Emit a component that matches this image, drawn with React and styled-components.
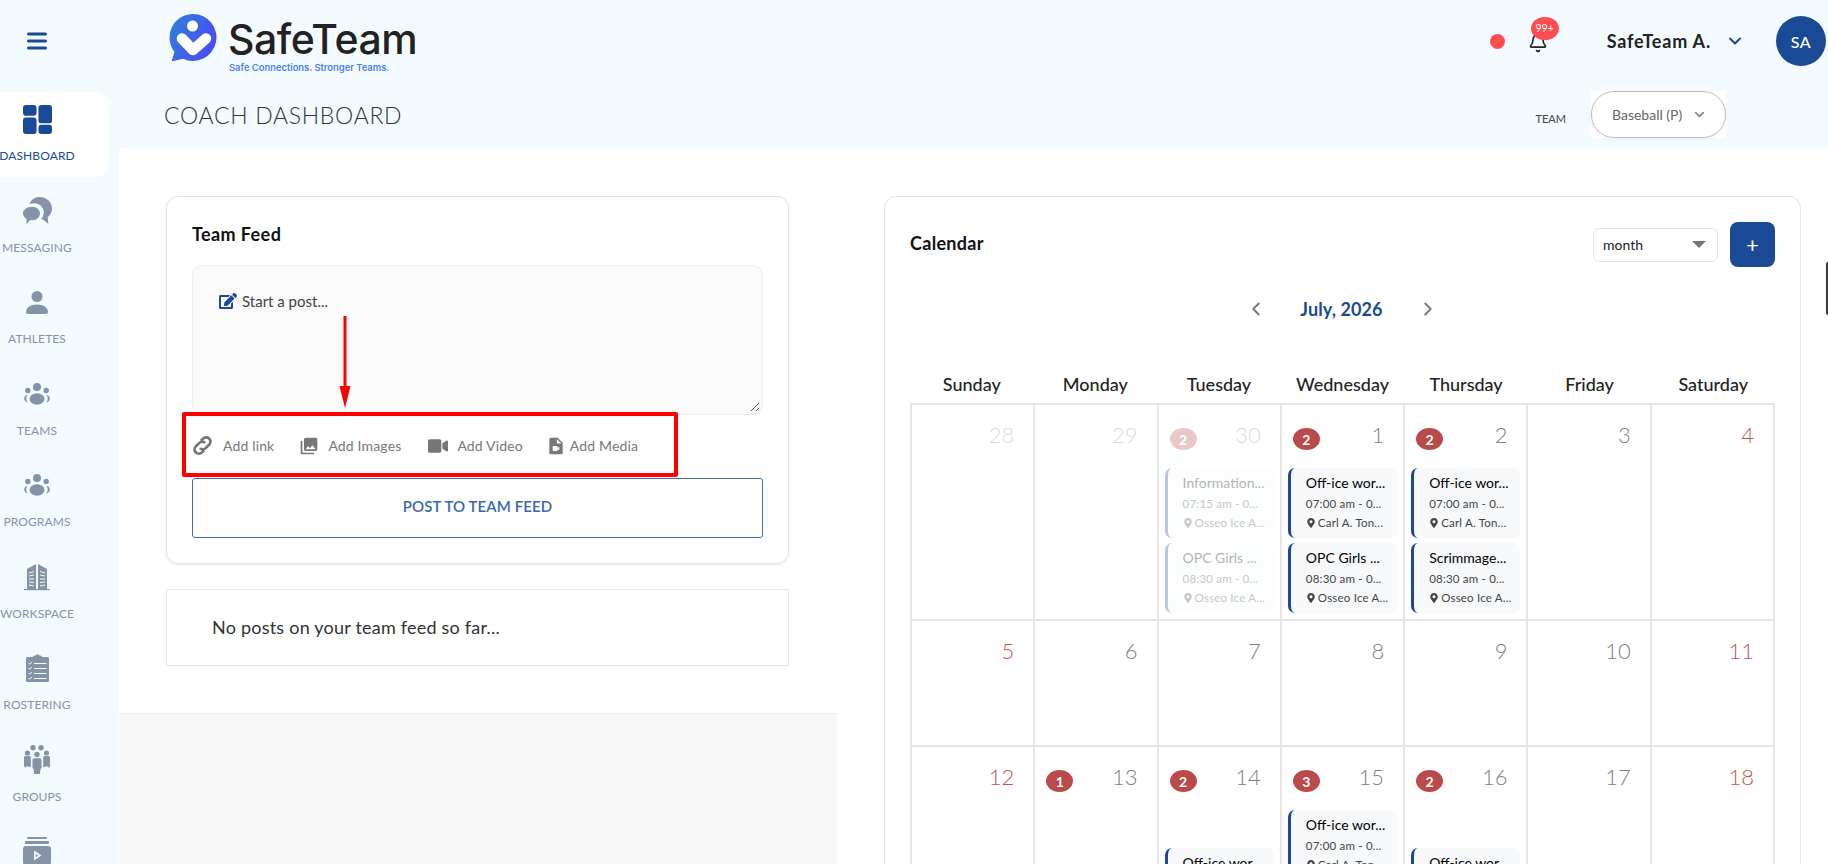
import React from "react";
import styled, { createGlobalStyle } from "styled-components";
import { FaVideo, FaMapMarkerAlt, FaEdit } from "react-icons/fa";
import { MdVideoFile, MdPhotoLibrary } from "react-icons/md";
import { ChevronDown, ChevronLeft, ChevronRight, Bell } from "lucide-react";

const NAVY = "#1a4a96";
const SKY = "#f3fbff";
const SIDE = "#8593a8";

const Global = createGlobalStyle`
  html, body { margin: 0; padding: 0; height: 100%; overflow: hidden; background: #fff; }
  body { font-family: Lato, "Open Sans", sans-serif; }
  * { box-sizing: border-box; }
`;

const Shell = styled.div`
  display: flex; width: 1828px; height: 864px; overflow: hidden; background: ${SKY}; position: relative;
`;
const Sidebar = styled.nav`
  width: 119px; flex: none; display: flex; flex-direction: column; overflow: hidden;
`;
const Burger = styled.div`
  height: 92px; width: 74px; flex: none; display: flex; align-items: center; justify-content: center; padding-bottom: 10px;
`;
const NavItem = styled.div`
  width: 109px; height: 85px; margin-bottom: 6.5px; flex: none; display: flex; flex-direction: column; align-items: center; padding-right: 35px;
  background: ${p => (p.$active ? "#fff" : "transparent")};
  border-radius: 0 14px 14px 0;
  color: ${p => (p.$active ? NAVY : SIDE)};
`;
const NavIcon = styled.div`
  height: 50px; width: 74px; flex: none; display: flex; align-items: center; justify-content: center; padding-top: 4px;
`;
const NavLabel = styled.div`
  font-size: 12px; line-height: 16px; margin-top: 6px; white-space: nowrap; text-align: center; width: 74px; display: flex; justify-content: center; letter-spacing: .1px;
`;
const Main = styled.div`
  flex: 1; min-width: 0; display: flex; flex-direction: column;
`;
const TopBar = styled.header`
  height: 82px; flex: none; display: flex; align-items: center; padding: 0 2px 0 50px;
`;
const Logo = styled.div`
  display: flex; align-items: flex-start; gap: 12px; margin-top: 5px;
`;
const WordBlock = styled.div`
  display: flex; flex-direction: column;
`;
const Word = styled.div`
  font-family: Inter, sans-serif; font-size: 41px; line-height: 44px; font-weight: 500; color: #222; letter-spacing: -.45px; margin-top: 3px; margin-left: -1px;
`;
const Tagline = styled.div`
  font-family: Inter, sans-serif; font-size: 9.4px; line-height: 12px; font-weight: 600; color: #4f80f5; margin-top: 1px;
`;
const TopRight = styled.div`
  margin-left: auto; display: flex; align-items: center;
`;
const StatusDot = styled.span`
  width: 15px; height: 15px; border-radius: 50%; background: #ff4d4f; margin-right: 21px;
`;
const BellWrap = styled.div`
  position: relative; width: 24px; height: 24px; margin-right: 57px; margin-top: 3px; color: #222; display: flex; align-items: center; justify-content: center;
`;
const BellBadge = styled.span`
  position: absolute; left: 5px; top: -14px; width: 28px; height: 23px; border-radius: 50%; background: #ff4d4f; color: #fff; font-size: 10.5px;
  display: flex; align-items: center; justify-content: center;
`;
const UserName = styled.span`
  font-size: 18px; font-weight: 700; color: #222; letter-spacing: .8px; margin-right: 14px;
`;
const Avatar = styled.div`
  width: 50px; height: 50px; border-radius: 50%; background: ${NAVY}; color: #fff; font-size: 16px; font-weight: 500;
  display: flex; align-items: center; justify-content: center; margin-left: 31px; letter-spacing: .5px;
`;
const SubBar = styled.div`
  height: 66px; flex: none; display: flex; align-items: flex-start; padding: 9px 102px 0 45px;
`;
const PageTitle = styled.h1`
  margin: 10px 0 0; font-size: 23px; line-height: 28px; font-weight: 300; color: #333; letter-spacing: .7px;
`;
const TeamLabel = styled.span`
  margin-left: auto; margin-top: 21px; font-size: 11px; color: #444; margin-right: 25px; line-height: 14px;
`;
const TeamSelect = styled.div`
  width: 135px; height: 47px; background: #fff;
`;
const TeamPill = styled.div`
  height: 100%; border: 1px solid #bdbdbd; border-radius: 23px; display: flex; align-items: center; justify-content: space-between; padding: 0 18px 0 20px; font-size: 14px; color: #666; box-shadow: 0 2px 4px rgba(0,0,0,.04);
`;
const Content = styled.div`
  flex: 1; min-height: 0; display: flex; background: #fff;
`;
const LeftCol = styled.div`
  width: 718px; flex: none; display: flex; flex-direction: column;
`;
const LeftTop = styled.div`
  height: 566px; flex: none; padding: 48px 48px 0 47px; background: #fff; border-bottom: 1px solid #eee;
`;
const LeftFill = styled.div`
  flex: 1; background: #f8f8f8;
`;
const RightCol = styled.div`
  flex: 1; padding: 48px 27px 0 47px; overflow: hidden;
`;
const FeedCard = styled.section`
  position: relative; height: 368px; border: 1px solid #e2e2e2; border-radius: 12px; padding: 26px 25px 0; box-shadow: 0 1px 3px rgba(0,0,0,.08);
`;
const CardTitle = styled.h2`
  margin: 0; font-size: 18px; line-height: 22px; font-weight: 700; color: #111; letter-spacing: .4px;
`;
const PostBox = styled.div`
  margin-top: 20px; height: 150px; background: #fafafa; border: 1px solid #eee; border-radius: 10px; padding: 26px 26px; position: relative;
  display: flex; align-items: flex-start; gap: 5px; font-size: 15px; color: #444;
`;
const Grip = styled.svg`
  position: absolute; right: 2px; bottom: 2px;
`;
const Attach = styled.div`
  height: 63px; padding-bottom: 2px; display: flex; align-items: center; font-size: 14px; color: #777; letter-spacing: .15px;
`;
const AttachItem = styled.span`
  display: flex; align-items: center; gap: ${p => p.$gap || 11}px; margin-right: ${p => p.$mr || 25}px; color: #777;
`;
const PostButton = styled.button`
  display: block; width: 100%; height: 60px; background: #fff; border: 1px solid #3f6cb0; border-radius: 3px; color: #3868ad;
  font: 600 15px Lato, sans-serif; letter-spacing: .1px; padding: 0 0 5px; cursor: pointer;
`;
const EmptyCard = styled.div`
  margin-top: 25px; height: 77px; border: 1px solid #e6e6e6; display: flex; align-items: center; padding: 0 0 2px 45px; font-size: 18px; letter-spacing: .22px; color: #333;
`;
const RedBox = styled.div`
  position: absolute; left: 15px; top: 215px; width: 496px; height: 65px; border: 4px solid #f00; border-radius: 2px; pointer-events: none;
`;
const RedArrow = styled.svg`
  position: absolute; left: 171px; top: 119px;
`;
const CalCard = styled.section`
  border: 1px solid #e2e2e2; border-radius: 12px 12px 0 0; padding: 24px 25px 0 25px; height: 900px;
`;
const CalHead = styled.div`
  display: flex; align-items: center; height: 46px;
`;
const CalTitle = styled.h2`
  margin: 0 0 2px; font-size: 18px; font-weight: 700; color: #111; letter-spacing: .3px;
`;
const ViewSelect = styled.div`
  margin-left: auto; width: 125px; height: 34px; margin-top: 1px; border: 1px solid #e4e4e4; border-radius: 6px; display: flex; align-items: center; justify-content: space-between; padding: 0 11px 0 9px; font-size: 14px; color: #222;
`;
const Caret = styled.span`
  width: 0; height: 0; border-left: 7px solid transparent; border-right: 7px solid transparent; border-top: 7px solid #777;
`;
const AddBtn = styled.button`
  margin-left: 12px; width: 45px; height: 45px; border: 0; border-radius: 8px; background: ${NAVY}; color: #fff; font: 400 22px Lato, sans-serif; display: flex; align-items: center; justify-content: center;
`;
const MonthNav = styled.div`
  display: flex; align-items: center; justify-content: center; height: 40px; margin-top: 22px; margin-left: -2px; color: #777;
`;
const MonthName = styled.span`
  width: 150px; text-align: center; font-size: 18px; font-weight: 700; color: ${NAVY}; letter-spacing: .1px;
`;
const WeekRow = styled.div`
  display: grid; grid-template-columns: repeat(7, 1fr); margin-top: 32px; height: 42px; align-items: center;
`;
const WeekDay = styled.div`
  text-align: center; font-size: 18px; font-weight: 500; color: #222; padding-top: 3px;
`;
const Grid = styled.div`
  display: grid; grid-template-columns: repeat(7, 1fr); border-top: 2px solid #e5e5e5; border-left: 2px solid #e5e5e5;
`;
const Cell = styled.div`
  height: ${p => p.$h}px; border-right: 2px solid #e5e5e5; border-bottom: 2px solid #e5e5e5; padding: 22px 6px 0; overflow: hidden;
`;
const CellTop = styled.div`
  display: flex; justify-content: space-between; height: 24px; padding: 0 0 0 5px; align-items: center; margin-bottom: 17px;
`;
const Badge = styled.span`
  width: 27px; height: 22px; border-radius: 50%; background: #bb4b4b; color: #fff; font-size: 14px; font-weight: 700; display: flex; align-items: center; justify-content: center;
  opacity: ${p => (p.$faded ? 0.3 : 1)};
`;
const DayNum = styled.span`
  margin-left: auto; margin-right: 13px; margin-bottom: 10px; font-size: 22px; font-weight: 300; color: ${p => (p.$red ? "#c05555" : "#808080")}; opacity: ${p => (p.$faded ? 0.28 : 1)};
`;
const Event = styled.div`
  height: 70px; margin-bottom: 5px; margin-top: ${p => p.$top || 0}px; background: #f7f9fb; border-left: 3px solid ${NAVY}; border-radius: 7px; padding: 4px 4px 0 15px; overflow: hidden; opacity: ${p => (p.$faded ? 0.3 : 1)};
`;
const EvTitle = styled.div`
  font-size: 14px; line-height: 22px; color: #000; white-space: nowrap;
`;
const EvMeta = styled.div`
  font-size: 11.5px; line-height: 19px; color: #444; white-space: nowrap; display: flex; align-items: center; gap: 2px; letter-spacing: .2px;
`;
const EdgeHandle = styled.div`
  position: absolute; right: 0; top: 262px; width: 2px; height: 53px; background: #3a3a3a; border-radius: 3px 0 0 3px;
`;

const Dash = () => (
  <svg width="29" height="29" viewBox="0 0 30 30" fill={NAVY}>
    <rect x="0" y="0" width="14" height="11" rx="3" /><rect x="0" y="13" width="14" height="17" rx="3" />
    <rect x="16" y="0" width="14" height="19" rx="3" /><rect x="16" y="20.500" width="14" height="9.500" rx="3" />
  </svg>
);
const Msg = () => (
  <svg width="31" height="30" viewBox="0 0 31 31" fill={SIDE}>
    <path d="M17 1c8 0 13.500 5 13.500 12 0 4-1.700 7-4.500 9l.8 7-6-5c-.6.1-1.200.1-1.800.1 2-2 3-4.500 3-7 0-5.500-4.500-9.500-10-9.500-1.800 0-3.300.3-4.700 1C9 4 12.500 1 17 1z"/>
    <path d="M10 11c4.600 0 8 3 8 7s-3.400 7-8 7c-.6 0-1.200-.1-1.700-.2L4 29l.1-5.500C1.900 22.200.5 20.200.5 18c0-4 4-7 9.500-7z"/>
  </svg>
);
const Person = () => (
  <svg width="22" height="23" viewBox="0 0 22 23" fill={SIDE}>
    <circle cx="11" cy="5.500" r="5.500"/><path d="M0 21c0-4.500 4.500-7.500 11-7.500S22 16.500 22 21c0 1.200-.8 2-2 2H2c-1.200 0-2-.8-2-2z"/>
  </svg>
);
const Group = () => (
  <svg width="26" height="22" viewBox="0 0 26 22" fill={SIDE}>
    <circle cx="13" cy="4" r="4"/><ellipse cx="13" cy="16" rx="7.500" ry="5.800"/>
    <circle cx="3.800" cy="7.500" r="2.700"/><circle cx="22.200" cy="7.500" r="2.700"/>
    <path d="M.2 15.500c0-2 1.300-3.300 3.300-3.800-1.600 2.300-1.600 5.300 0 8C1.500 19 .2 17.500.2 15.500z"/>
    <path d="M25.800 15.500c0-2-1.300-3.300-3.300-3.800 1.600 2.300 1.600 5.300 0 8 2-.7 3.300-2.200 3.300-4.200z"/>
  </svg>
);
const Tower = () => (
  <svg width="26" height="28" viewBox="0 0 26 28" fill={SIDE}>
    <path d="M3 6l9-5v25H3zM14 1l9 5v20h-9z"/><rect x="0" y="26" width="26" height="1.200"/>
    <path d="M5 10l5-1.500M5 13l5-1M5 16h5M5 19l5 .5M5 22l5 1M21 10l-5-1.500M21 13l-5-1M21 16h-5M21 19l-5 .5M21 22l-5 1" stroke="#f3fbff" strokeWidth="1"/>
  </svg>
);
const Clip = () => (
  <svg width="23" height="28" viewBox="0 0 23 28" fill={SIDE}>
    <rect x="0" y="3" width="23" height="25" rx="1.500"/><path d="M7 3c0-1 1-1.500 2.500-1.500L11.500 0l2 1.500C15 1.500 16 2 16 3v2H7z"/>
    <path d="M2.500 9l1.200 1.200L6 8M2.500 14l1.200 1.200L6 13M2.500 19l1.200 1.200L6 18M2.500 24l1.200 1.200L6 23" stroke="#f3fbff" strokeWidth="1" fill="none"/>
    <path d="M8 9.500h12.500M8 14.500h12.500M8 19.500h12.500M8 24.500h12.500" stroke="#f3fbff" strokeWidth="1"/>
  </svg>
);
const Crowd = () => (
  <svg width="26" height="29" viewBox="0 0 26 29" fill={SIDE}>
    <circle cx="9" cy="2.800" r="2.700"/><circle cx="17" cy="2.800" r="2.700"/>
    <circle cx="3.500" cy="8" r="2.600"/><circle cx="22.500" cy="8" r="2.600"/><circle cx="13" cy="9.500" r="2.700"/>
    <path d="M0 12.500c0-1 1-1.500 2-1.500h3c1 0 1.800.7 1.800 1.500V22H5v-.5H2V22.500H1L0 21zM19.200 12.500c0-.8.800-1.500 1.800-1.500h3c1 0 2 .5 2 1.500V21l-1 1.500h-1v-1h-3v.5h-1.800zM8.500 15c0-1 1-1.700 2-1.700h5c1 0 2 .7 2 1.700v8l-1 1-.6 5h-5.800l-.6-5-1-1z"/>
  </svg>
);
const Play = () => (
  <svg width="28" height="28" viewBox="0 0 28 28" fill={SIDE}>
    <rect x="4" y="0" width="20" height="2" rx="1"/><rect x="2" y="4" width="24" height="3" rx="1"/>
    <rect x="0" y="9" width="28" height="19" rx="3"/><path d="M11 13.500l7.500 5-7.500 5z" fill="#f3fbff"/><path d="M12.800 16.800l2.300 1.700-2.300 1.700z" fill={SIDE}/>
  </svg>
);

const nav = [
  ["DASHBOARD", <Dash />, true], ["MESSAGING", <Msg />], ["ATHLETES", <Person />],
  ["TEAMS", <Group />], ["PROGRAMS", <Group />],
  ["WORKSPACE", <Tower />], ["ROSTERING", <Clip />], ["GROUPS", <Crowd />], ["", <Play />],
];

const LogoMark = () => (
  <svg width="48" height="48" viewBox="0 0 48 48">
    <defs><linearGradient id="lg" x1="0" y1="0" x2="1" y2=".5"><stop offset="0" stopColor="#2d84d8"/><stop offset="1" stopColor="#4a4cf7"/></linearGradient></defs>
    <path d="M24 0a23.500 23.500 0 1 1-10 44.800L2.500 47.500l3-9.500A23.500 23.500 0 0 1 24 0z" fill="url(#lg)"/>
    <circle cx="23.500" cy="12" r="5.500" fill="#fff"/>
    <path d="M13 24.500L24 36L37 24.500" fill="none" stroke="#fff" strokeWidth="10.500" strokeLinecap="round" strokeLinejoin="round"/>
  </svg>
);
const LinkIcon = () => (
  <svg width="21" height="21" viewBox="0 0 20 20" fill="none" stroke="#777" strokeWidth="2.600">
    <path d="M8.500 5.500l2-2a4 4 0 0 1 6 5.500l-3.500 3.500a4 4 0 0 1-5.500 0"/><path d="M11.500 14.500l-2 2a4 4 0 0 1-6-5.500L7 7.500a4 4 0 0 1 5.500 0"/>
  </svg>
);

const ev = (title, time, loc, extra = {}) => ({ title, time, loc, ...extra });
const days = [
  [
    { n: 28, faded: true }, { n: 29, faded: true },
    { n: 30, faded: true, badge: 2, events: [ev("Information...", "07:15 am - 0...", "Osseo Ice A..."), ev("OPC Girls ...", "08:30 am - 0...", "Osseo Ice A...")] },
    { n: 1, badge: 2, events: [ev("Off-ice wor...", "07:00 am - 0...", "Carl A. Ton..."), ev("OPC Girls ...", "08:30 am - 0...", "Osseo Ice A...")] },
    { n: 2, badge: 2, events: [ev("Off-ice wor...", "07:00 am - 0...", "Carl A. Ton..."), ev("Scrimmage...", "08:30 am - 0...", "Osseo Ice A...")] },
    { n: 3 }, { n: 4, red: true },
  ],
  [{ n: 5, red: true }, { n: 6 }, { n: 7 }, { n: 8 }, { n: 9 }, { n: 10 }, { n: 11, red: true }],
  [
    { n: 12, red: true }, { n: 13, badge: 1 },
    { n: 14, badge: 2, events: [ev("Off-ice wor...", "07:00 am - 0...", "Carl A. Ton...", { top: 55 })] },
    { n: 15, badge: 3, events: [ev("Off-ice wor...", "07:00 am - 0...", "Carl A. Ton...")] },
    { n: 16, badge: 2, events: [ev("Off-ice wor...", "07:00 am - 0...", "Carl A. Ton...", { top: 55 })] },
    { n: 17 }, { n: 18, red: true },
  ],
];
const heights = [216, 126, 216];
const weekdays = ["Sunday", "Monday", "Tuesday", "Wednesday", "Thursday", "Friday", "Saturday"];

export default function App() {
  return (
    <Shell>
      <Global />
      <Sidebar>
        <Burger>
          <svg width="20" height="18" viewBox="0 0 20 18" stroke={NAVY} strokeWidth="3" strokeLinecap="round"><path d="M1.500 2h17M1.500 9h17M1.500 16h17" /></svg>
        </Burger>
        {nav.map(([label, icon, active], i) => (
          <NavItem key={i} $active={active}>
            <NavIcon>{icon}</NavIcon>
            {label && <NavLabel>{label}</NavLabel>}
          </NavItem>
        ))}
      </Sidebar>
      <Main>
        <TopBar>
          <Logo>
            <LogoMark />
            <WordBlock>
              <Word>SafeTeam</Word>
              <Tagline>Safe Connections. Stronger Teams.</Tagline>
            </WordBlock>
          </Logo>
          <TopRight>
            <StatusDot />
            <BellWrap><Bell size={20} strokeWidth={2} /><BellBadge>99+</BellBadge></BellWrap>
            <UserName>SafeTeam A.</UserName>
            <ChevronDown size={20} color={NAVY} strokeWidth={2.500} />
            <Avatar>SA</Avatar>
          </TopRight>
        </TopBar>
        <SubBar>
          <PageTitle>COACH DASHBOARD</PageTitle>
          <TeamLabel>TEAM</TeamLabel>
          <TeamSelect><TeamPill>Baseball (P)<ChevronDown size={15} color="#888" strokeWidth={3} /></TeamPill></TeamSelect>
        </SubBar>
        <Content>
          <LeftCol>
            <LeftTop>
              <FeedCard>
                <CardTitle>Team Feed</CardTitle>
                <PostBox>
                  <FaEdit size={18} color={NAVY} />Start a post...
                  <Grip width="10" height="10" viewBox="0 0 10 10" stroke="#555"><path d="M1 9l8-8M6 9l3-3" /></Grip>
                </PostBox>
                <Attach>
                  <AttachItem $gap={10} $mr={25}><LinkIcon />Add link</AttachItem>
                  <AttachItem $gap={9} $mr={27}><MdPhotoLibrary size={20} />Add Images</AttachItem>
                  <AttachItem $gap={9} $mr={23}><FaVideo size={20} />Add Video</AttachItem>
                  <AttachItem $gap={4}><MdVideoFile size={20} />Add Media</AttachItem>
                </Attach>
                <PostButton>POST TO TEAM FEED</PostButton>
                <RedBox />
                <RedArrow width="14" height="92" viewBox="0 0 14 92" fill="#f00"><rect x="5.500" y="0" width="3" height="72" /><path d="M1.500 70h11L7 92z" /></RedArrow>
              </FeedCard>
              <EmptyCard>No posts on your team feed so far...</EmptyCard>
            </LeftTop>
            <LeftFill />
          </LeftCol>
          <RightCol>
            <CalCard>
              <CalHead>
                <CalTitle>Calendar</CalTitle>
                <ViewSelect>month<Caret /></ViewSelect>
                <AddBtn>+</AddBtn>
              </CalHead>
              <MonthNav>
                <ChevronLeft size={22} strokeWidth={2} />
                <MonthName>July, 2026</MonthName>
                <ChevronRight size={22} strokeWidth={2} />
              </MonthNav>
              <WeekRow>{weekdays.map(d => <WeekDay key={d}>{d}</WeekDay>)}</WeekRow>
              <Grid>
                {days.map((row, r) => row.map(d => (
                  <Cell key={d.n + "-" + r} $h={heights[r]}>
                    <CellTop>
                      {d.badge && <Badge $faded={d.faded}>{d.badge}</Badge>}
                      <DayNum $red={d.red} $faded={d.faded}>{d.n}</DayNum>
                    </CellTop>
                    {(d.events || []).map((e, i) => (
                      <Event key={i} $faded={d.faded} $top={e.top}>
                        <EvTitle>{e.title}</EvTitle>
                        <EvMeta>{e.time}</EvMeta>
                        <EvMeta><FaMapMarkerAlt size={10} />{e.loc}</EvMeta>
                      </Event>
                    ))}
                  </Cell>
                )))}
              </Grid>
            </CalCard>
          </RightCol>
        </Content>
      </Main>
      <EdgeHandle />
    </Shell>
  );
}
